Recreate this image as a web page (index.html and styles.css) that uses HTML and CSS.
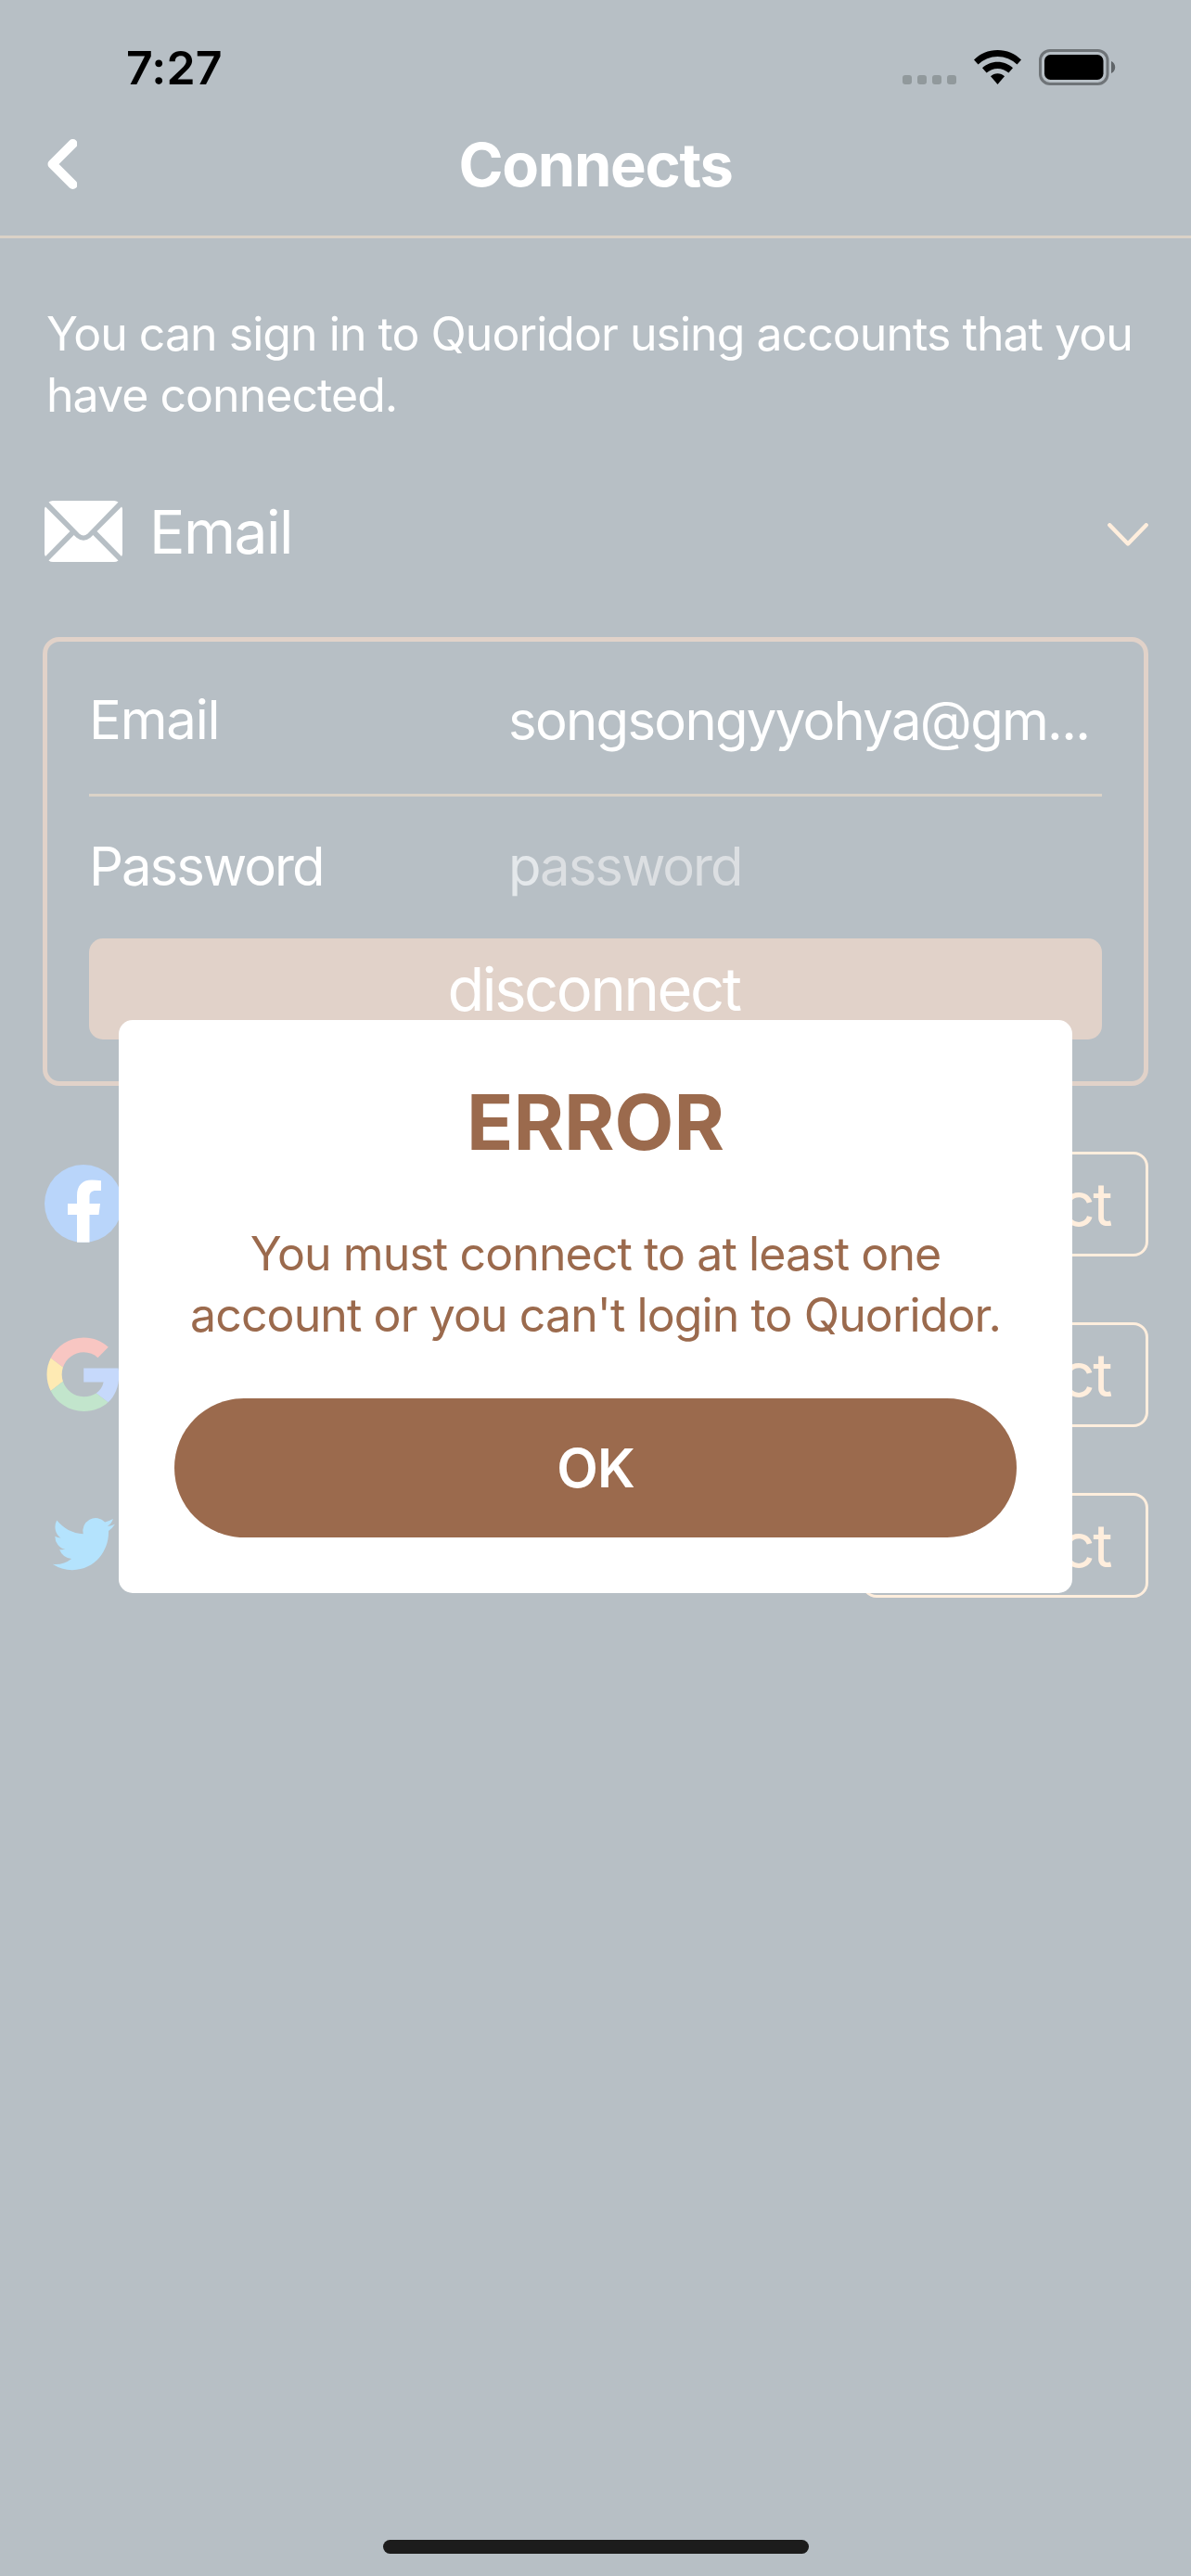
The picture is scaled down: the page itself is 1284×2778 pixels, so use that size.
FILE: index.html
```html
<!DOCTYPE html>
<html lang="en">
<head>
<meta charset="utf-8">
<title>Connects</title>
<link rel="stylesheet" href="styles.css">
</head>
<body>
<div class="screen">
  <div class="status">
    <span class="time">7:27</span>
    <div class="dots"><i></i><i></i><i></i><i></i></div>
    <svg class="wifi" viewBox="0 0 51 37"><path d="M25.500 0C35.500 0 44.500 4 51 10.500L46.500 15.500A30 30 0 0 0 4.500 15.500L0 10.500C6.500 4 15.500 0 25.500 0Z"/><path d="M25.500 12.700C31.800 12.700 37.600 15.100 42 19.300L37.400 24.600A17.500 17.500 0 0 0 13.600 24.600L9 19.300C13.400 15.100 19.200 12.700 25.500 12.700Z"/><path d="M25.500 25.200C28.400 25.200 31 26.300 33 28.200L25.500 37L18 28.200C20 26.300 22.600 25.200 25.500 25.200Z"/></svg>
    <svg class="battery" viewBox="0 0 83 39"><rect x="1.500" y="1.500" width="72.500" height="36" rx="10.500" fill="none" stroke="#6f7478" stroke-width="3"/><rect x="6" y="6" width="63.500" height="27" rx="6.500"/><path d="M78 13V26C80.500 25 82.200 22.500 82.200 19.500S80.500 14 78 13Z" fill="#5f6468"/></svg>
  </div>
  <header class="nav">
    <svg class="back" viewBox="0 0 32 54"><path d="M27.500 5L5.500 27L27.500 49" fill="none" stroke="#fff" stroke-width="10" stroke-linecap="round" stroke-linejoin="round"/></svg>
    <h1 class="title">Connects</h1>
  </header>
  <main class="content">
    <p class="intro">You can sign in to Quoridor using accounts that you<br>have connected.</p>
    <div class="provider">
      <svg class="mail" viewBox="0 0 84 66" fill="#fff"><path d="M4.500 1.500Q6.500 0 9 0H75Q77.500 0 79.500 1.500L46.500 35.500Q42 39.500 37.500 35.500Z"/><path d="M0 9Q0 7.500 1 6.500L27.500 33L1 60Q0 58.500 0 57Z"/><path d="M84 9Q84 7.500 83 6.500L56.500 33L83 60Q84 58.500 84 57Z"/><path d="M4.500 64.500L31.700 37L34.500 39.800Q42 45.800 49.500 39.800L52.300 37L79.500 64.500Q77.500 66 75 66H9Q6.500 66 4.500 64.500Z"/></svg>
      <h2 class="provider-name">Email</h2>
      <svg class="chevron" viewBox="0 0 44 26"><path d="M2.300 2.300L22 22.500L41.700 2.300" fill="none" stroke="#ffeedd" stroke-width="4.400" stroke-linecap="round" stroke-linejoin="round"/></svg>
    </div>
    <section class="card">
      <div class="field field-email"><span class="label label-email">Email</span><span class="value">songsongyyohya@gm...</span></div>
      <div class="field"><span class="label">Password</span><span class="value placeholder">password</span></div>
      <div class="disconnect"><span>disconnect</span></div>
    </section>
    <div class="accounts">
      <div class="account">
        <svg class="logo" viewBox="0 0 84 84"><circle cx="42" cy="42" r="42" fill="#b9d5fa"/><path fill="#fff" d="M35 83.800V54H25V42H35V33.500C35 22.500 40.500 16.500 51 16.500Q56 16.500 61 17.200V28H55.500C50.500 28 48.500 30.500 48.500 34.500V42H60L58.500 54H48.500V83.800Z"/></svg>
        <div class="connect">connect</div>
      </div>
      <div class="account">
        <svg class="logo" viewBox="0 0 84 84"><g transform="translate(2.500 2.500) scale(1.655)"><path fill="#f8c6c2" d="M24 9.500c3.540 0 6.710 1.220 9.210 3.600l6.850-6.850C35.900 2.380 30.470 0 24 0 14.620 0 6.510 5.380 2.560 13.220l7.980 6.190C12.430 13.720 17.740 9.500 24 9.500z"/><path fill="#c6d9fb" d="M46.980 24.550c0-1.570-.15-3.090-.38-4.550H24v9.020h12.940c-.58 2.960-2.260 5.480-4.780 7.180l7.730 6c4.510-4.180 7.090-10.360 7.090-17.650z"/><path fill="#feeab3" d="M10.530 28.590c-.48-1.450-.76-2.990-.76-4.590s.27-3.140.76-4.590l-7.980-6.190C.92 16.460 0 20.120 0 24c0 3.880.92 7.540 2.560 10.780l7.970-6.190z"/><path fill="#c2e5cc" d="M24 48c6.480 0 11.930-2.130 15.890-5.810l-7.730-6c-2.150 1.450-4.920 2.300-8.160 2.300-6.260 0-11.570-4.220-13.470-9.910l-7.980 6.190C6.510 42.620 14.620 48 24 48z"/></g></svg>
        <div class="connect">connect</div>
      </div>
      <div class="account">
        <svg class="logo" viewBox="0 0 84 84"><path fill="#b4e3fd" transform="translate(8.700 6.500) scale(2.800 2.880)" d="M23.953 4.570a10 10 0 01-2.825.775 4.958 4.958 0 002.163-2.723c-.951.555-2.005.959-3.127 1.184a4.920 4.920 0 00-8.384 4.482C7.690 8.095 4.067 6.130 1.640 3.162a4.822 4.822 0 00-.666 2.475c0 1.710.87 3.213 2.188 4.096a4.904 4.904 0 01-2.228-.616v.060a4.923 4.923 0 003.946 4.827 4.996 4.996 0 01-2.212.085 4.936 4.936 0 004.604 3.417 9.867 9.867 0 01-6.102 2.105c-.39 0-.779-.023-1.170-.067a13.995 13.995 0 007.557 2.209c9.053 0 13.998-7.496 13.998-13.985 0-.21 0-.42-.015-.63A9.935 9.935 0 0024 4.590z"/></svg>
        <div class="connect">connect</div>
      </div>
    </div>
  </main>
  <div class="home"></div>
  <div class="dialog">
    <h2 class="dialog-title">ERROR</h2>
    <p class="dialog-text">You must connect to at least one<br>account or you can't login to Quoridor.</p>
    <div class="ok">OK</div>
  </div>
</div>
</body>
</html>
```
FILE: styles.css
```css
* { box-sizing: border-box; margin: 0; padding: 0; }
body { background: #b7bfc5; font-family: Inter, "Liberation Sans", sans-serif; color: #fff; }
svg { display: block; flex: none; }
.screen { position: relative; width: 1284px; height: 2778px; overflow: hidden; display: flex; flex-direction: column; }
.status { height: 141px; flex: none; display: flex; align-items: flex-start; color: #000; padding: 53px 81px 0 136px; }
.time { font-size: 50px; line-height: 40px; font-weight: 600; letter-spacing: 0.2px; margin-right: auto; }
.dots { display: flex; gap: 6px; margin: 28px 19px 0 0; }
.dots i { width: 10px; height: 10px; border-radius: 3px; background: #91999c; }
.wifi { width: 51px; height: 37px; margin: 1px 19px 0 0; }
.battery { width: 83px; height: 39px; }
.nav { height: 116px; flex: none; border-bottom: 3px solid #dbd2c7; display: grid; grid-template-columns: 100px 1fr 100px; align-items: start; padding: 9px 51px 0; }
.back { width: 32px; height: 54px; }
.title { font-size: 65px; line-height: 56px; font-weight: 700; text-align: center; letter-spacing: -1.3px; }
.content { flex: none; padding: 70px 46px 0; }
.intro { font-size: 50px; line-height: 66px; letter-spacing: -0.96px; padding-left: 4px; white-space: nowrap; }
.provider { display: flex; align-items: center; height: 70px; margin-top: 79px; padding-left: 2px; }
.mail { width: 84px; height: 66px; }
.provider-name { font-size: 64px; line-height: 70px; font-weight: 400; margin: 2px auto 0 29px; letter-spacing: -1.500px; }
.chevron { width: 44px; height: 26px; margin-top: 7px; }
.card { margin-top: 79px; height: 484px; border: 5px solid #e1d2c9; border-radius: 18px; padding: 8px 45px 0; }
.field { display: grid; grid-template-columns: 452px 1fr; height: 153px; align-items: center; font-size: 58px; line-height: 70px; white-space: nowrap; padding-bottom: 4px; }
.field-email { height: 159px; border-bottom: 3px solid #dbd3c8; padding-bottom: 2px; }
.label { letter-spacing: -2px; }
.label-email { letter-spacing: -1.2px; padding-bottom: 3px; }
.value { display: block; letter-spacing: -1.7px; }
.placeholder { color: #dcdfe2; letter-spacing: -2px; }
.placeholder::first-letter { color: #e4e8eb; }
.disconnect { height: 109px; border-radius: 15px; background: #e1d2c9; font-size: 65px; line-height: 109px; text-align: center; letter-spacing: -2.4px; padding-right: 4px; }
.accounts { display: flex; flex-direction: column; gap: 71px; margin-top: 71px; padding-left: 2px; }
.account { display: flex; justify-content: space-between; align-items: center; height: 113px; }
.logo { width: 84px; height: 84px; margin-bottom: 2px; }
.connect { width: 309px; height: 113px; border: 3px solid #ffeedd; border-radius: 16px; color: #ffeedd; font-size: 65px; line-height: 107px; text-align: center; letter-spacing: -2.4px; padding-right: 5px; }
.home { width: 459px; height: 15px; border-radius: 8px; background: #1c1c1c; margin: auto auto 24px 413px; flex: none; }
.dialog { position: absolute; left: 128px; top: 1100px; width: 1028px; height: 618px; border-radius: 15px; background: #fff; color: #9b6a4d; padding: 60px 60px 0; text-align: center; }
.dialog-title { font-size: 83px; line-height: 100px; font-weight: 700; letter-spacing: 0; }
.dialog-text { font-size: 50px; line-height: 66px; letter-spacing: -0.9px; margin-top: 59px; white-space: nowrap; }
.ok { height: 150px; margin-top: 57px; border-radius: 75px; background: #9b6a4d; color: #fff; font-size: 58px; line-height: 150px; font-weight: 600; letter-spacing: -1px; }
```
